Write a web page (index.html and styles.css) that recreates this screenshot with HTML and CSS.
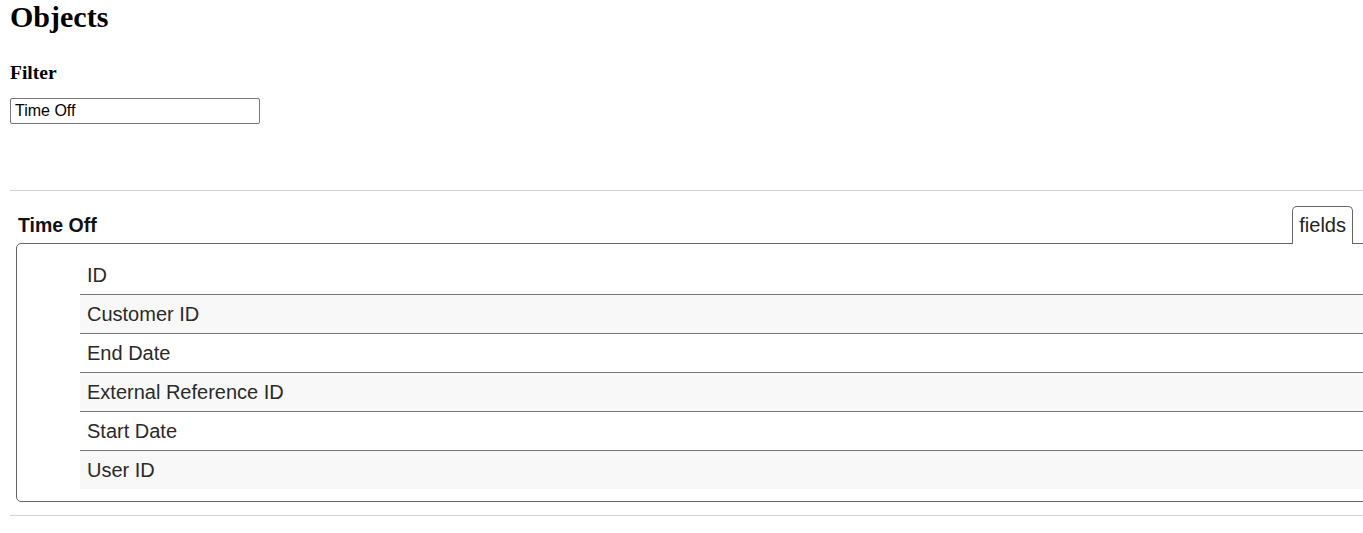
FILE: index.html
```html
<!DOCTYPE html>
<html lang="en">
<head>
<meta charset="utf-8">
<title>Objects</title>
<link rel="stylesheet" href="styles.css">
</head>
<body>
<div class="page">
  <h1 class="title">Objects</h1>
  <h3 class="filter-label">Filter</h3>
  <input class="filter-input" type="text" value="Time Off">
  <hr class="rule rule-top">
  <section class="object">
    <div class="object-head">
      <h2 class="object-name">Time Off</h2>
      <div class="tab">fields</div>
    </div>
    <div class="object-box">
      <ul class="fields">
        <li class="field">ID</li>
        <li class="field">Customer ID</li>
        <li class="field">End Date</li>
        <li class="field">External Reference ID</li>
        <li class="field">Start Date</li>
        <li class="field">User ID</li>
      </ul>
    </div>
  </section>
  <hr class="rule rule-bottom">
</div>
</body>
</html>
```

FILE: styles.css
```css
html, body {
  margin: 0;
  padding: 0;
  background: #fff;
}

.page {
  padding: 0 10px;
  overflow: hidden;
  font-family: "Liberation Sans", Arial, sans-serif;
  color: #000;
}

.title {
  margin: 0;
  font-family: "Liberation Serif", "Times New Roman", serif;
  font-size: 30px;
  line-height: 34px;
  font-weight: bold;
}

.filter-label {
  margin: 28px 0 0;
  font-family: "Liberation Serif", "Times New Roman", serif;
  font-size: 19.5px;
  line-height: 22px;
  font-weight: bold;
}

.filter-input {
  display: block;
  box-sizing: border-box;
  margin: 14px 0 0;
  width: 250px;
  height: 26px;
  padding: 0 4px;
  border: 1px solid #767676;
  border-radius: 2px;
  font-family: "Liberation Sans", Arial, sans-serif;
  font-size: 16px;
  color: #000;
  background: #fff;
}

.rule {
  border: 0;
  height: 1px;
  background: #d3d3d3;
  margin-left: 0;
  margin-right: -40px;
}

.rule-top {
  margin-top: 66px;
  margin-bottom: 0;
}

.rule-bottom {
  margin-top: 13px;
  margin-bottom: 0;
}

.object-head {
  display: flex;
  align-items: flex-end;
  justify-content: space-between;
  margin-top: 15px;
  padding-left: 8px;
}

.object-name {
  margin: 0;
  font-size: 19.5px;
  line-height: 37px;
  font-weight: bold;
  color: #111;
}

.tab {
  position: relative;
  z-index: 1;
  background: #fff;
  border: 1px solid #666;
  border-bottom: 0;
  border-radius: 5px 5px 0 0;
  padding: 0 6px;
  font-size: 20px;
  line-height: 37px;
  color: #222;
}

.object-box {
  margin: -1px -60px 0 6px;
  border: 1px solid #666;
  border-radius: 5px;
  padding: 12px 0 12px 63px;
}

.fields {
  list-style: none;
  margin: 0;
  padding: 0;
}

.field {
  height: 38px;
  line-height: 38px;
  padding-left: 7px;
  font-size: 20px;
  color: #2a2a2a;
  background: #fff;
}

.field + .field {
  border-top: 1px solid #777;
}

.field:nth-child(even) {
  background: #f8f8f8;
}
```
